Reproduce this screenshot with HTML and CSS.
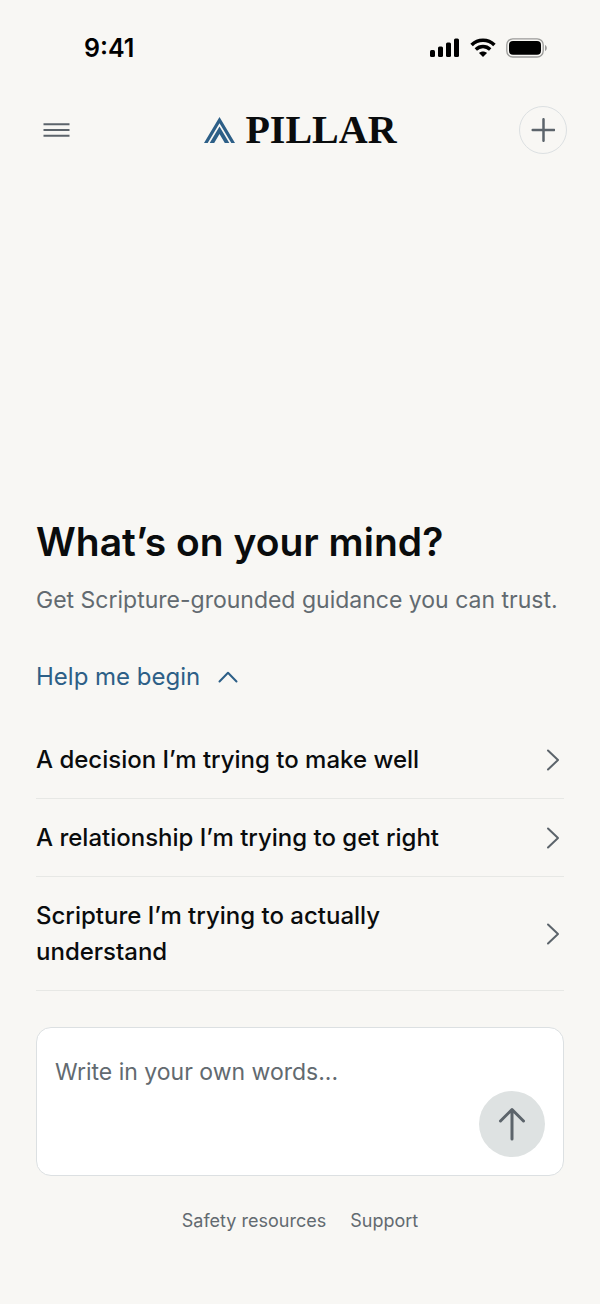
FILE: index.html
```html
<!DOCTYPE html>
<html lang="en">

<head>
    <meta charset="UTF-8">
    <meta name="viewport" content="width=device-width, initial-scale=1.0">
    <title>Pillar</title>
    <link rel="stylesheet" href="styles.css">
</head>

<body>

    <div class="status-bar">
        <span class="time">9:41</span>
        <div class="status-icons">
            <svg width="30" height="20" viewBox="0 0 30 20">
                <rect x="0" y="12" width="5" height="7" rx="1.5" />
                <rect x="8" y="8.5" width="5" height="10.5" rx="1.5" />
                <rect x="16" y="4.5" width="5" height="14.5" rx="1.5" />
                <rect x="24" y="0.5" width="5" height="18.5" rx="1.5" />
            </svg>
            <svg width="26" height="20" viewBox="0 0 26 20">
                <path d="M1.6 7C8 0.7 18 0.7 24.4 7" fill="none" stroke="#000" stroke-width="3.6" />
                <path d="M5.8 11.5C10 7.5 16 7.5 20.2 11.5" fill="none" stroke="#000" stroke-width="3.4" />
                <path d="M9 15C11.3 13 14.7 13 17 15L13 19Z" />
            </svg>
            <svg width="42" height="20" viewBox="0 0 42 20">
                <rect x="0.8" y="0.8" width="36.4" height="18.2" rx="6" fill="none" stroke="#9b9b99" stroke-width="1.3" />
                <rect x="3" y="3" width="32" height="13.8" rx="4" />
                <path d="M39 7V13C41.4 12 41.4 8 39 7Z" fill="#9b9b99" />
            </svg>
        </div>
    </div>

    <header class="header">
        <button class="menu-btn" type="button" aria-label="Menu">
            <svg width="28" height="18" viewBox="0 0 28 18">
                <path d="M0.5 3.2H26.5M0.5 9H26.5M0.5 14.8H26.5" />
            </svg>
        </button>
        <div class="logo">
            <svg width="32" height="28" viewBox="0 0 32 28">
                <path d="M1 27L16.5 1L32 27H28.3L16.5 7.2L4.7 27Z" />
                <path d="M6.7 27L16.5 10.6L26.3 27H21.8L16.5 18L11.2 27Z" />
            </svg>
            <span>PILLAR</span>
        </div>
        <button class="new-btn" type="button" aria-label="New conversation">
            <svg width="24" height="24" viewBox="0 0 24 24">
                <path d="M12.5 1.2V22.8M1.7 12H23.3" />
            </svg>
        </button>
    </header>

    <main class="content">
        <h1>What’s on your mind?</h1>
        <p class="subtitle">Get Scripture-grounded guidance you can trust.</p>

        <button class="help-btn" type="button" aria-expanded="true">
            Help me begin
            <svg width="20" height="12" viewBox="0 0 20 12">
                <path d="M1.5 10.5L10 1.8L18.5 10.5" />
            </svg>
        </button>

        <div class="prompts">
            <button class="prompt" type="button">
                <span>A decision I’m trying to make well</span>
                <svg width="14" height="22" viewBox="0 0 14 22">
                    <path d="M2 1.5L12 11L2 20.5" />
                </svg>
            </button>
            <button class="prompt" type="button">
                <span>A relationship I’m trying to get right</span>
                <svg width="14" height="22" viewBox="0 0 14 22">
                    <path d="M2 1.5L12 11L2 20.5" />
                </svg>
            </button>
            <button class="prompt" type="button">
                <span>Scripture I’m trying to actually understand</span>
                <svg width="14" height="22" viewBox="0 0 14 22">
                    <path d="M2 1.5L12 11L2 20.5" />
                </svg>
            </button>
        </div>

        <form class="composer">
            <textarea aria-label="Your message" placeholder="Write in your own words..."></textarea>
            <button class="send-btn" type="submit" aria-label="Send">
                <svg width="28" height="34" viewBox="0 0 28 34">
                    <path d="M14 32V2.5M2.5 14L14 2.5L25.5 14" />
                </svg>
            </button>
        </form>
    </main>

    <footer class="footer">
        <a href="#">Safety resources</a>
        <a href="#">Support</a>
    </footer>

</body>

</html>
```

FILE: styles.css
```css
* {
    margin: 0;
    padding: 0;
    box-sizing: border-box;
}

body {
    display: flex;
    flex-direction: column;
    min-height: 100vh;
    background: #f8f7f4;
    color: #0a0c0d;
    font-family: Inter, sans-serif;
}

button,
textarea {
    border: none;
    background: none;
    color: inherit;
    font-family: inherit;
}

button {
    cursor: pointer;
}

svg {
    display: block;
    flex-shrink: 0;
}

.status-bar {
    display: flex;
    justify-content: space-between;
    align-items: center;
    height: 96px;
    padding: 0 52px 0 84px;
}

.time {
    font-size: 25px;
    font-weight: 600;
    color: #000;
}

.status-icons {
    display: flex;
    align-items: center;
    gap: 10px;
}

.header {
    display: flex;
    justify-content: space-between;
    align-items: center;
    padding: 10px 33px;
}

.menu-btn,
.new-btn {
    display: flex;
    justify-content: center;
    align-items: center;
    width: 48px;
    height: 48px;
}

.menu-btn svg,
.new-btn svg {
    fill: none;
    stroke: #5c646b;
    stroke-width: 2;
}

.new-btn {
    border: 1px solid #dce0e2;
    border-radius: 50%;
}

.new-btn svg {
    stroke-width: 2.5;
    stroke-linecap: round;
}

.logo {
    display: flex;
    align-items: center;
    gap: 10px;
    font-family: "Liberation Serif", serif;
    font-size: 40px;
    line-height: 48px;
    font-weight: 700;
}

.logo svg {
    fill: #2d5f87;
}

.content {
    display: flex;
    flex-direction: column;
    margin-top: auto;
    padding: 0 36px;
}

h1 {
    font-size: 39px;
    line-height: 48px;
    font-weight: 600;
}

.subtitle {
    margin-top: 16px;
    color: #626a70;
    font-size: 23px;
    line-height: 36px;
}

.help-btn {
    display: flex;
    align-items: center;
    align-self: flex-start;
    gap: 18px;
    margin-top: 41px;
    color: #2d5f87;
    font-size: 24px;
    line-height: 36px;
}

.help-btn svg {
    fill: none;
    stroke: #2d5f87;
    stroke-width: 2;
    stroke-linecap: round;
    stroke-linejoin: round;
}

.prompts {
    margin-top: 26px;
}

.prompt {
    display: flex;
    justify-content: space-between;
    align-items: center;
    gap: 72px;
    width: 100%;
    padding: 21px 4px 20px 0;
    border-bottom: 1px solid #e7e8e5;
    font-size: 24px;
    line-height: 36px;
    font-weight: 500;
    text-align: left;
}

.prompt svg {
    fill: none;
    stroke: #5c646b;
    stroke-width: 2;
    stroke-linecap: round;
    stroke-linejoin: round;
}

.composer {
    display: flex;
    align-items: flex-end;
    margin-top: 36px;
    padding: 18px;
    border: 1px solid #dce0e2;
    border-radius: 15px;
    background: #fff;
}

.composer textarea {
    flex: 1;
    min-width: 0;
    height: 111px;
    padding: 8px 0;
    resize: none;
    outline: none;
    font-size: 23px;
    line-height: 36px;
}

.composer textarea::placeholder {
    color: #626a70;
}

.send-btn {
    display: flex;
    justify-content: center;
    align-items: center;
    width: 66px;
    height: 66px;
    border-radius: 50%;
    background: #dee2e2;
}

.send-btn svg {
    fill: none;
    stroke: #5c646b;
    stroke-width: 3;
    stroke-linecap: round;
    stroke-linejoin: round;
}

.footer {
    display: flex;
    justify-content: center;
    gap: 24px;
    padding: 33px 36px 71px;
    font-size: 18px;
    line-height: 24px;
}

.footer a {
    color: #626a70;
    text-decoration: none;
}
```
